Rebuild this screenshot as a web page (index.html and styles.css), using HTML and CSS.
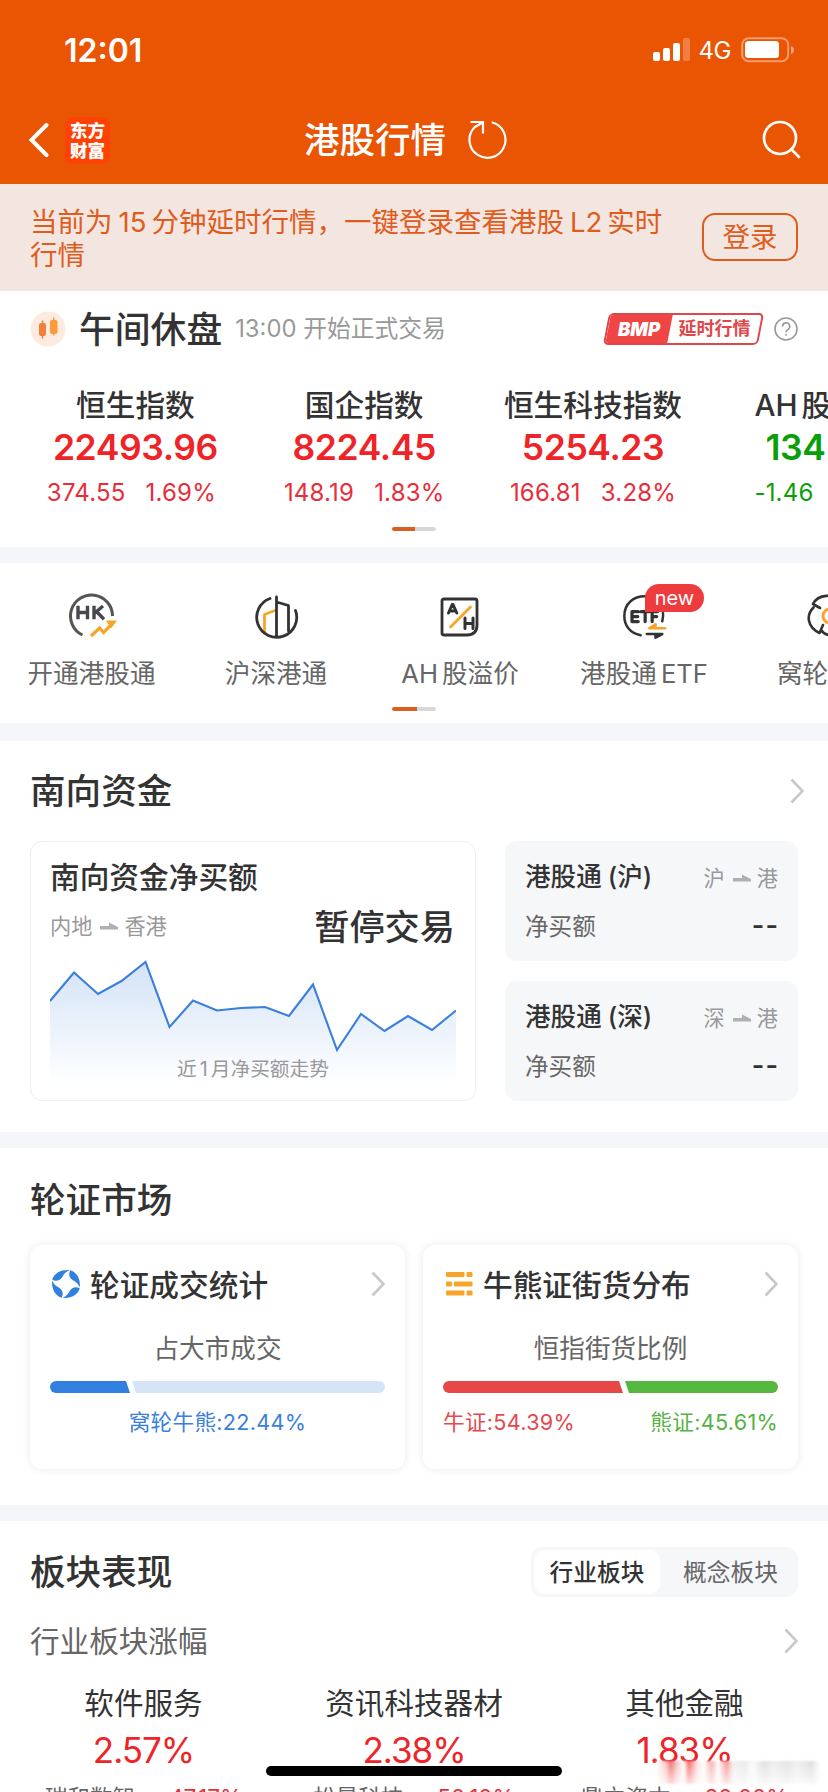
FILE: index.html
```html
<!DOCTYPE html>
<html lang="zh-CN">
<head>
<meta charset="utf-8">
<title>港股行情</title>
<link rel="stylesheet" href="styles.css">
</head>
<body>
<div class="phone">
  <header class="top">
    <div class="status">
      <span class="clock">12:01</span>
      <div class="status-right">
        <svg width="37" height="24" viewBox="0 0 37 24" fill="#fff"><rect x="0" y="14" width="7" height="9" rx="2"/><rect x="10" y="10" width="7" height="13" rx="2"/><rect x="20" y="5" width="7" height="18" rx="2"/><rect x="30" y="0" width="7" height="23" rx="2" opacity=".25"/></svg>
        <span class="net">4G</span>
        <svg class="battery" width="54" height="26" viewBox="0 0 54 26"><rect x="1.2" y="1.2" width="46" height="23" rx="6.5" fill="none" stroke="#fff" stroke-opacity=".42" stroke-width="2"/><rect x="4" y="4" width="34" height="17" rx="3.5" fill="#fff"/><path d="M50 9q3 1 3 4t-3 4z" fill="#fff" opacity=".45"/></svg>
      </div>
    </div>
    <nav class="nav">
      <svg class="back" width="22" height="36" viewBox="0 0 22 36" fill="none" stroke="#fff" stroke-width="4" stroke-linecap="round" stroke-linejoin="miter"><path d="M19.500 3 4.500 18 19.500 33"/></svg>
      <div class="logo"><span>东方</span><span>财富</span></div>
      <h1 class="nav-title">港股行情</h1>
      <svg class="refresh" width="40" height="40" viewBox="0 0 40 40" fill="none" stroke="#fff" stroke-width="2.200"><path d="M24.700 2.300A18 18 0 1 1 7.600 7.200L15.500 2.500"/><path d="M3.500 2H16V13.500"/></svg>
      <svg class="search" width="40" height="40" viewBox="0 0 40 40" fill="none" stroke="#fff" stroke-width="2.700" stroke-linecap="round"><circle cx="18" cy="18" r="16"/><path d="M29.500 29.500 37 37"/></svg>
    </nav>
  </header>

  <section class="notice">
    <p class="notice-text">当前为<span class="latin">15</span>分钟延时行情，一键登录查看港股<span class="latin">L2</span>实时<br>行情</p>
    <button class="login">登录</button>
  </section>

  <section class="market">
    <div class="session">
      <svg width="36" height="36" viewBox="0 0 36 36"><circle cx="18" cy="18" r="17.500" fill="#fdebe0"/><g fill="#f0803c"><rect x="9" y="12" width="7" height="13" rx="2"/><rect x="11.800" y="9.500" width="1.500" height="18"/></g><g fill="#fb9a3c"><rect x="20" y="9" width="7.500" height="14" rx="2"/><rect x="23" y="6.500" width="1.500" height="18"/></g></svg>
      <h2 class="session-title">午间休盘</h2>
      <span class="session-time">13:00 开始正式交易</span>
      <div class="bmp"><span class="bmp-left"><b>BMP</b></span><span class="bmp-right"><b>延时行情</b></span></div>
      <svg class="help" width="24" height="24" viewBox="0 0 24 24" fill="none" stroke="#999" stroke-width="1.600"><circle cx="12" cy="12" r="11"/><path d="M8.500 9.500a3.600 3.600 0 1 1 5.300 3.100c-1.300.8-1.800 1.300-1.800 2.700"/><path d="M12 16.700v2"/></svg>
    </div>
    <div class="indices">
      <div class="index"><span class="index-name">恒生指数</span><span class="index-value">22493.96</span><span class="index-change"><i>374.55</i><i>1.69%</i></span></div>
      <div class="index"><span class="index-name">国企指数</span><span class="index-value">8224.45</span><span class="index-change"><i>148.19</i><i>1.83%</i></span></div>
      <div class="index"><span class="index-name">恒生科技指数</span><span class="index-value">5254.23</span><span class="index-change"><i>166.81</i><i>3.28%</i></span></div>
      <div class="index index-cut down"><span class="index-name"><em>AH</em>股</span><span class="index-value">134</span><span class="index-change"><i>-1.46</i></span></div>
    </div>
    <div class="pager"></div>
  </section>

  <section class="tools">
    <div class="tool-row">
      <div class="tool">
        <svg width="52" height="48" viewBox="0 0 52 48" fill="none"><path d="M16.500 42A21 21 0 1 1 46.500 23" stroke="#555" stroke-width="3"/><g stroke="#47484d" stroke-width="3.400"><path d="M12 12.800v13.400M21.500 12.800v13.400M12 19.500h9.500M28 12.800v13.400M37 13l-8.500 7.200M30.500 18.500l7.500 7.700"/></g><path d="M25 43 33.500 35l4 4.500L47 30" stroke="#f7a428" stroke-width="3.200"/><path d="M40 27.500h11l-6 8z" fill="#f7a428"/></svg>
        <span>开通港股通</span>
      </div>
      <div class="tool">
        <svg width="48" height="48" viewBox="0 0 48 48" fill="none" stroke-width="2.800" stroke-linecap="round" stroke-linejoin="round"><path d="M12.500 39V21.500L23 17.500" stroke="#f7a428"/><path d="M18 5.500A20 20 0 1 0 43.500 17.500M24.500 4v39M24.500 9l12 3.500V38" stroke="#333"/></svg>
        <span>沪深港通</span>
      </div>
      <div class="tool">
        <svg width="48" height="48" viewBox="0 0 48 48" fill="none" stroke-linecap="round" stroke-linejoin="round"><path d="M8 6h31q2 0 2 2v24q0 10-10 10H8q-2 0-2-2V8q0-2 2-2z" stroke="#333" stroke-width="2.800"/><g stroke="#333" stroke-width="3"><path d="m12.500 20 3.700-8.500h.8L20.800 20M14 18h5M29 25v10.500M37 25v10.500M29 30.500h8"/></g><path d="M14.500 34 34.500 14" stroke="#f7a428" stroke-width="2.800"/></svg>
        <span class="wide"><em>AH</em>股溢价</span>
      </div>
      <div class="tool">
        <svg width="48" height="50" viewBox="0 0 48 50" fill="none" stroke-linecap="round" stroke-linejoin="round"><path d="M20.500 44C9 42 3.500 33.500 3.500 24 3.500 11 13 3.500 25 3.500S47 14 43 29.500" stroke="#333" stroke-width="2.600"/><g stroke="#333" stroke-width="3.400"><path d="M18 19.500h-6.500v10.300H18M11.500 24.600h6M21 19.500h8.500M25.200 19.500v10.300M32.500 29.800V19.500h5.500M32.500 24.600h4.700"/></g><path d="M46 36.700H29.500l6.500-4v4" stroke="#f7a428" stroke-width="2.700"/><path d="M27 42.700h16l-7 3.800v-3.300" stroke="#333" stroke-width="2.700"/></svg>
        <b class="badge">new</b>
        <span>港股通<em class="tail">ETF</em></span>
      </div>
      <div class="tool tool-cut">
        <svg width="52" height="48" viewBox="0 0 52 48" fill="none" stroke-width="2.600" stroke-linecap="round"><g stroke="#333"><path d="M8 11C13 1 30 0 34 9M8 11l7 4M8.500 14.500C1 22 2 34 14.500 40M14.500 40l3.500-8M16 37c4 6 15 8 22 3M39 13c7 5 8 15 5 21"/></g><circle cx="25" cy="23" r="7" stroke="#f7a428" stroke-width="3"/></svg>
        <span>窝轮</span>
      </div>
    </div>
    <div class="pager pager-tools"></div>
  </section>

  <section class="south">
    <div class="head">
      <h2 class="section-title">南向资金</h2>
      <svg class="chev" width="14" height="26" viewBox="0 0 14 26"><path d="M1.500 1.500 12.500 13 1.500 24.500"/></svg>
    </div>
    <div class="south-body">
      <div class="flow-card">
        <h3 class="flow-title">南向资金净买额</h3>
        <div class="flow-row">
          <span class="route">内地<svg width="18" height="8" viewBox="0 0 18 8"><path d="M0 4h9V.500L18 5v2.500H0z"/></svg>香港</span>
          <strong class="halt">暂停交易</strong>
        </div>
        <div class="chart">
          <svg width="406" height="124" viewBox="0 0 406 124">
            <defs><linearGradient id="area" x1="0" y1="0" x2="0" y2="1"><stop offset="0" stop-color="#d3e2f6"/><stop offset=".5" stop-color="#e9f1fb"/><stop offset="1" stop-color="#fff"/></linearGradient></defs>
            <path fill="url(#area)" d="M0 41 24 12.500 48 34 71.500 21 95.500 2 119.500 67 143 40.500 167 50.500 191 48 215 47 239 56 263 24.500 287 90 311 54 334.500 71 358 56 382 70 406 50.500V124H0z"/>
            <path fill="none" stroke="#3a7fdc" stroke-width="2.100" d="M0 41 24 12.500 48 34 71.500 21 95.500 2 119.500 67 143 40.500 167 50.500 191 48 215 47 239 56 263 24.500 287 90 311 54 334.500 71 358 56 382 70 406 50.500"/>
          </svg>
          <span class="chart-note">近<em>1</em>月净买额走势</span>
        </div>
      </div>
      <div class="side">
        <div class="side-card">
          <div class="side-row"><strong>港股通<em>(</em>沪<em class="close">)</em></strong><span class="route">沪<svg width="18" height="8" viewBox="0 0 18 8"><path d="M0 4h9V.500L18 5v2.500H0z"/></svg>港</span></div>
          <div class="side-row"><span class="net-label">净买额</span><span class="dashes">--</span></div>
        </div>
        <div class="side-card">
          <div class="side-row"><strong>港股通<em>(</em>深<em class="close">)</em></strong><span class="route">深<svg width="18" height="8" viewBox="0 0 18 8"><path d="M0 4h9V.500L18 5v2.500H0z"/></svg>港</span></div>
          <div class="side-row"><span class="net-label">净买额</span><span class="dashes">--</span></div>
        </div>
      </div>
    </div>
  </section>

  <section class="warrants">
    <h2 class="section-title">轮证市场</h2>
    <div class="warrant-cards">
      <div class="wcard">
        <div class="wcard-head">
          <svg class="wicon" width="30" height="30" viewBox="0 0 30 30" fill="#3180e0"><path id="petal" d="M1.200 10.500C3.500 4 10 .3 18.500 1.200 14.500 3 13 4.800 11.500 7.700 9.300 11.700 4.500 13 1.200 10.500z"/><use href="#petal" transform="rotate(90 15 15)"/><use href="#petal" transform="rotate(180 15 15)"/><use href="#petal" transform="rotate(270 15 15)"/></svg>
          <h3>轮证成交统计</h3>
          <svg class="chev" width="14" height="26" viewBox="0 0 14 26"><path d="M1.500 1.500 12.500 13 1.500 24.500"/></svg>
        </div>
        <p class="wcard-sub">占大市成交</p>
        <div class="ratio"><span class="part first blue" style="width:80px"></span><span class="part last pale"></span></div>
        <div class="legend center blue-text">窝轮牛熊:22.44%</div>
      </div>
      <div class="wcard">
        <div class="wcard-head">
          <svg class="wicon" width="30" height="30" viewBox="0 0 30 30" fill="#f7a428"><rect x="2" y="3" width="18.500" height="5" rx="1"/><rect x="22.500" y="3" width="6" height="5" rx="1"/><rect x="2" y="12.500" width="6" height="5" rx="1"/><rect x="10" y="12.500" width="18.500" height="5" rx="1"/><rect x="2" y="21.500" width="18.500" height="5" rx="1"/><rect x="22.500" y="21.500" width="6" height="5" rx="1"/></svg>
          <h3>牛熊证街货分布</h3>
          <svg class="chev" width="14" height="26" viewBox="0 0 14 26"><path d="M1.500 1.500 12.500 13 1.500 24.500"/></svg>
        </div>
        <p class="wcard-sub">恒指街货比例</p>
        <div class="ratio"><span class="part first red" style="width:180px"></span><span class="part last green"></span></div>
        <div class="legend"><span class="red-text">牛证:54.39%</span><span class="green-text">熊证:45.61%</span></div>
      </div>
    </div>
  </section>

  <section class="sectors">
    <div class="sector-head">
      <h2 class="section-title">板块表现</h2>
      <div class="segment"><span class="on">行业板块</span><span>概念板块</span></div>
    </div>
    <div class="sector-sub">
      <span>行业板块涨幅</span>
      <svg class="chev" width="14" height="26" viewBox="0 0 14 26"><path d="M1.500 1.500 12.500 13 1.500 24.500"/></svg>
    </div>
    <div class="sector-grid">
      <div class="sector"><span class="sector-name">软件服务</span><span class="sector-value">2.57%</span><span class="leader">瑞和数智<i>47.17%</i></span></div>
      <div class="sector"><span class="sector-name">资讯科技器材</span><span class="sector-value">2.38%</span><span class="leader">松景科技<i>50.10%</i></span></div>
      <div class="sector"><span class="sector-name">其他金融</span><span class="sector-value">1.83%</span><span class="leader">鼎立资本<i>20.00%</i></span></div>
    </div>
  </section>
  <div class="smudge"></div>
  <div class="home-bar"></div>
</div>
</body>
</html>
```

FILE: styles.css
```css
* { box-sizing: border-box; }
body, h1, h2, h3, p { margin: 0; }
body {
  width: 828px;
  font-family: Inter, "Noto Sans CJK SC", sans-serif;
  color: #333;
  background: #fff;
}
i, em { font-style: normal; }
svg { display: block; flex: none; }
h1, h2, h3, strong { font-weight: 500; }
.phone {
  position: relative;
  width: 828px;
  height: 1792px;
  overflow: hidden;
  background: #f5f6f9;
  display: flex;
  flex-direction: column;
  white-space: nowrap;
}
section { flex: none; }

/* header */
.top { height: 184px; flex: none; background: #ea5504; color: #fff; }
.status {
  height: 96px;
  padding: 4px 33px 0 64px;
  display: flex;
  align-items: center;
  justify-content: space-between;
}
.clock { font-size: 32px; font-weight: 600; }
.status-right { display: flex; align-items: center; }
.net { margin: 0 10px 0 9px; font-size: 24px; font-weight: 400; letter-spacing: -.5px; }
.nav { height: 88px; display: flex; align-items: center; padding: 0 26px 0 27px; }
.logo {
  width: 45px;
  height: 47px;
  margin-left: 16px;
  border-radius: 8px;
  background: #fd4303;
  display: flex;
  flex-direction: column;
  justify-content: center;
  align-items: center;
  font: 900 17.500px/20px "Noto Sans CJK SC", sans-serif;
}
.nav-title { margin-left: 194px; padding-top: 2px; font-size: 35.500px; line-height: 50px; }
.refresh { margin-left: 21px; }
.search { margin-left: auto; margin-right: 0; }

/* notice */
.notice {
  height: 107px;
  padding: 22px 30px;
  background: #f3e6e1;
  color: #e05c1c;
  display: flex;
  justify-content: space-between;
}
.notice-text { font-size: 27.500px; line-height: 33px; }
.latin { margin: 0 5px 0 6px; }
.login {
  width: 96px;
  height: 48px;
  margin-top: 7px;
  padding: 0;
  border: 2px solid #e05c1c;
  border-radius: 13px;
  background: none;
  color: #e05c1c;
  font: 27.500px/44px Inter, "Noto Sans CJK SC", sans-serif;
}

/* market */
.market { height: 256px; background: #fff; }
.session { height: 76px; padding: 0 30px; display: flex; align-items: center; }
.session-title { margin-left: 13px; padding-top: 1px; font-size: 35.800px; line-height: 50px; }
.session-time { margin-left: 13px; font-size: 23.800px; line-height: 34px; margin-top: -1px; color: #999; }
.bmp {
  width: 155px;
  height: 32px;
  margin-left: auto;
  display: flex;
  border: 2px solid #e0474b;
  border-radius: 5px;
  transform: skewX(-11deg);
  overflow: hidden;
}
.bmp b { display: block; transform: skewX(11deg); }
.bmp-left { width: 62px; background: #f04545; color: #fff; text-align: center; }
.bmp-left b { font-size: 18.500px; line-height: 28px; font-weight: 900; font-style: italic; }
.bmp-right { flex: 1; text-align: center; color: #e0474b; }
.bmp-right b { font-size: 18px; line-height: 28px; font-weight: 600; }
.help { margin-left: 13px; }
.indices { display: flex; padding-left: 21px; height: 160px; padding-top: 17px; overflow: hidden; }
.index { flex: 0 0 228.800px; display: flex; flex-direction: column; align-items: center; }
.index-name { font-size: 29.700px; line-height: 42px; font-weight: 500; }
.index-value { font-size: 35.500px; line-height: 43px; font-weight: 600; letter-spacing: -.4px; color: #ee2428; }
.index-change { display: flex; gap: 20px; margin-top: 2px; padding-right: 8px; font-size: 24px; line-height: 44px; letter-spacing: .2px; color: #e82e3a; }
.index:nth-child(2) .index-change, .index:nth-child(3) .index-change { padding-right: 0; }
.index-cut { flex-basis: 80px; padding-left: 47px; align-items: flex-start; }
.index-cut em { margin-right: 4px; }
.index-cut .index-value { padding-left: 11px; }
.down .index-value, .down .index-change { color: #0a9f0a; }
.pager {
  width: 44px;
  height: 4px;
  margin: 0 auto;
  border-radius: 2px;
  background: linear-gradient(90deg, #d9601f 23px, #d8d8db 23px);
}

/* tools */
.tools { height: 160px; margin-top: 16px; background: #fff; }
.tool-row { height: 144px; padding-top: 30px; display: flex; overflow: hidden; }
.tool { position: relative; flex: 0 0 184px; display: flex; flex-direction: column; align-items: center; }
.tool svg { height: 48px; }
.tool:first-child { padding-right: 1px; }
.tool span { margin-top: 14px; font-size: 25.600px; line-height: 37px; color: #666; }
.tool em { margin-right: 4px; }
.tool em.tail { margin: 0 0 0 4px; }
.badge {
  position: absolute;
  left: 93px;
  top: -9px;
  width: 59px;
  height: 28px;
  border-radius: 14px 14px 14px 0;
  background: #ee3b3e;
  color: #fff;
  font-size: 20px;
  font-weight: 400;
  line-height: 28px;
  text-align: center;
}
.tool-cut { align-items: flex-start; padding-left: 41px; }
.tool-cut svg { margin-left: 28px; }
.pager-tools { background: linear-gradient(90deg, #d9601f 25px, #d8d8db 25px); }

/* southbound */
.south { height: 391px; margin-top: 18px; background: #fff; }
.head { height: 100px; padding: 0 24px 0 30px; display: flex; align-items: center; justify-content: space-between; }
.section-title { padding-top: 2px; font-size: 35.600px; line-height: 50px; }
.chev path { fill: none; stroke: #c8c8cb; stroke-width: 2.600; }
.south-body { display: flex; justify-content: space-between; padding: 0 30px; }
.flow-card { width: 446px; height: 260px; padding: 14px 19px 0; border: 1.500px solid #eeeef0; border-radius: 12px; }
.flow-title { font-size: 29.700px; line-height: 42px; }
.flow-row { height: 50px; margin-top: 2px; display: flex; justify-content: space-between; align-items: center; padding-right: 1px; }
.halt { font-size: 35.200px; line-height: 46px; margin-top: 3px; }
.route { display: flex; align-items: center; font-size: 21.200px; line-height: 30px; padding-top: 1px; color: #999; }
.route svg { margin: 0 6px 0 8px; fill: #b0b0b2; }
.chart { position: relative; margin-top: 10px; }
.chart-note { position: absolute; left: 0; right: 0; top: 95px; text-align: center; font-size: 19.700px; line-height: 28px; color: #999; }
.chart-note em { margin: 0 3px; }
.side { width: 293px; display: flex; flex-direction: column; gap: 20px; }
.side-card { height: 120px; padding: 12px 20px 0; border-radius: 12px; background: #f6f7f9; }
.side-row { height: 48px; display: flex; align-items: center; justify-content: space-between; }
.side-row strong { font-size: 25.600px; line-height: 36px; margin-top: -1px; }
.side-row em { margin-left: 6px; }
.side-row em.close { margin-left: 0; }
.net-label { font-size: 23.600px; color: #666; }
.dashes { font-size: 27px; font-weight: 600; letter-spacing: 1px; margin-right: -1px; }

/* warrants */
.warrants { height: 357px; margin-top: 16px; padding: 26px 30px 0; background: #fff; }
.warrant-cards { display: flex; justify-content: space-between; margin-top: 19px; }
.wcard { width: 375px; height: 224px; padding: 19px 20px 0; border-radius: 12px; background: #fff; box-shadow: 0 0 10px rgba(0, 0, 0, .09); }
.wcard-head { height: 40px; display: flex; align-items: center; }
.wicon { margin-left: 1px; margin-right: 9px; }
.wcard h3 { padding-top: 1px; font-size: 29.700px; line-height: 40px; }
.wcard-head .chev { margin-left: auto; }
.wcard-sub { margin-top: 27px; text-align: center; font-size: 25.600px; line-height: 36px; color: #666; }
.ratio { display: flex; height: 12px; margin-top: 14px; }
.part { height: 12px; flex: none; }
.first { border-radius: 6px 0 0 6px; clip-path: polygon(0 0, calc(100% - 4px) 0, 100% 100%, 0 100%); }
.last { flex: 1; margin-left: 2px; border-radius: 0 6px 6px 0; clip-path: polygon(0 0, 100% 0, 100% 100%, 4px 100%); }
.blue { background: #3180e0; }
.pale { background: #d5e4f6; }
.red { background: #e74747; }
.green { background: #55b83e; }
.legend { margin-top: 13px; display: flex; justify-content: space-between; font-size: 21.600px; line-height: 32px; letter-spacing: .3px; }
.center { justify-content: center; }
.blue-text { color: #3a7fdc; }
.red-text { color: #e5484d; }
.green-text { color: #55b245; }

/* sectors */
.sectors { height: 271px; margin-top: 16px; background: #fff; overflow: hidden; }
.sector-head { height: 102px; padding: 0 30px; display: flex; align-items: center; justify-content: space-between; }
.segment { width: 267px; height: 50px; padding: 3px; border-radius: 12px; background: #f6f7f9; display: flex; font-size: 23.700px; line-height: 45px; color: #666; }
.segment span { flex: 1; text-align: center; padding-left: 6px; }
.segment .on { flex: 0 0 126px; padding-left: 0; border-radius: 10px; background: #fff; color: #333; font-weight: 500; }
.sector-sub { height: 36px; padding: 0 30px; display: flex; align-items: center; justify-content: space-between; font-size: 29.600px; line-height: 36px; color: #666; }
.sector-grid { display: flex; justify-content: center; padding-top: 22px; }
.sector { width: 270.500px; display: flex; flex-direction: column; align-items: center; }
.sector-name { font-size: 29.600px; line-height: 44px; }
.sector-value { margin-top: 3px; font-size: 35px; line-height: 44px; letter-spacing: -1px; color: #ee2428; }
.leader { display: flex; gap: 34px; margin-top: 10px; font-size: 22.500px; line-height: 32px; color: #666; }
.leader i { color: #e82e3a; }

/* overlays */
.smudge {
  position: absolute;
  left: 656px;
  top: 1761px;
  width: 164px;
  height: 23px;
  filter: blur(1px);
  background:
    linear-gradient(180deg, rgba(255, 255, 255, .15), rgba(255, 255, 255, .8)),
    linear-gradient(90deg, #fff, #f6c0c0 6%, #f05050 9%, #f9c0c0 13%, #fff 17%, #f04a4a 20%, #fbdada 25%, #fff 29%, #f4a0a0 34%, #fff 38%, #f28080 43%, #f2eeee 47%, #e4e4e4 54%, #fafafa 59%, #dadada 66%, #ececec 72%, #dedede 80%, #ececec 86%, #d8d8d8 95%, #fff);
}
.home-bar { position: absolute; left: 266px; top: 1766px; width: 296px; height: 10px; border-radius: 5px; background: #000; }
```
